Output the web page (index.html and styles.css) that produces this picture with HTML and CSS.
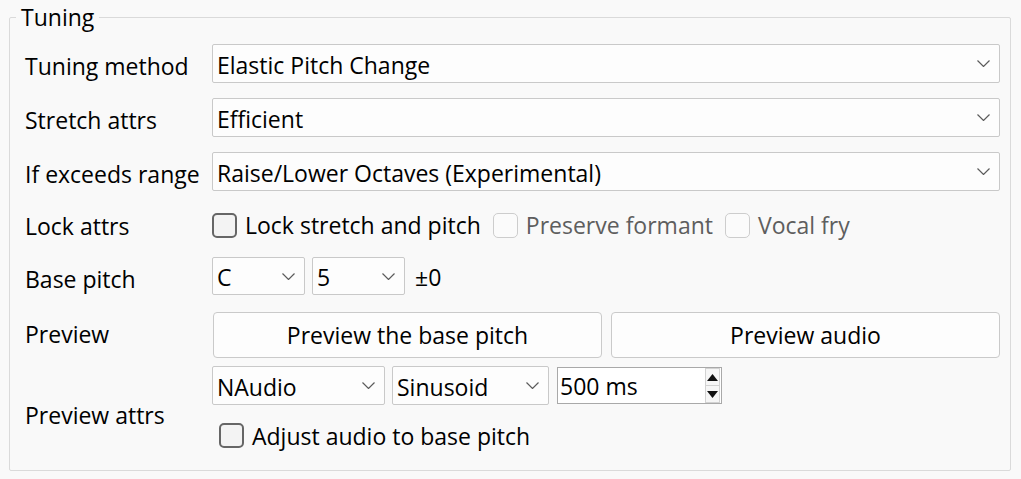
FILE: index.html
```html
<!DOCTYPE html>
<html>
<head>
<meta charset="utf-8">
<link rel="stylesheet" href="styles.css">
</head>
<body>
<fieldset class="group">
  <legend class="legend">Tuning</legend>

  <div class="row">
    <div class="label">Tuning method</div>
    <div class="combo wide"><span>Elastic Pitch Change</span><svg class="chev" width="13" height="7" viewBox="0 0 13 7"><polyline points="0.5,0.5 6.5,6.5 12.5,0.5"/></svg></div>
  </div>

  <div class="row gap15">
    <div class="label">Stretch attrs</div>
    <div class="combo wide"><span>Efficient</span><svg class="chev" width="13" height="7" viewBox="0 0 13 7"><polyline points="0.5,0.5 6.5,6.5 12.5,0.5"/></svg></div>
  </div>

  <div class="row gap15">
    <div class="label">If exceeds range</div>
    <div class="combo wide"><span>Raise/Lower Octaves (Experimental)</span><svg class="chev" width="13" height="7" viewBox="0 0 13 7"><polyline points="0.5,0.5 6.5,6.5 12.5,0.5"/></svg></div>
  </div>

  <div class="row gap15 checkrow">
    <div class="label mid">Lock attrs</div>
    <div class="checks">
      <label class="check"><span class="box"></span><span>Lock stretch and pitch</span></label>
      <label class="check disabled"><span class="box"></span><span>Preserve formant</span></label>
      <label class="check disabled"><span class="box"></span><span>Vocal fry</span></label>
    </div>
  </div>

  <div class="row gap13">
    <div class="label">Base pitch</div>
    <div class="inline">
      <div class="combo small"><span>C</span><svg class="chev" width="13" height="7" viewBox="0 0 13 7"><polyline points="0.5,0.5 6.5,6.5 12.5,0.5"/></svg></div>
      <div class="combo small"><span>5</span><svg class="chev" width="13" height="7" viewBox="0 0 13 7"><polyline points="0.5,0.5 6.5,6.5 12.5,0.5"/></svg></div>
      <span class="offset">±0</span>
    </div>
  </div>

  <div class="row gap17">
    <div class="label">Preview</div>
    <div class="buttons">
      <button class="btn">Preview the base pitch</button>
      <button class="btn">Preview audio</button>
    </div>
  </div>

  <div class="row gap8 attrs">
    <div class="label mid attrs-label">Preview attrs</div>
    <div class="stack">
      <div class="inline">
        <div class="combo backend"><span>NAudio</span><svg class="chev" width="13" height="7" viewBox="0 0 13 7"><polyline points="0.5,0.5 6.5,6.5 12.5,0.5"/></svg></div>
        <div class="combo wave"><span>Sinusoid</span><svg class="chev" width="13" height="7" viewBox="0 0 13 7"><polyline points="0.5,0.5 6.5,6.5 12.5,0.5"/></svg></div>
        <div class="numeric">
          <span class="num-text">500 ms</span>
          <div class="spin">
            <div class="spin-btn"><svg width="11" height="7" viewBox="0 0 11 7"><polygon points="5.5,0 11,7 0,7"/></svg></div>
            <div class="spin-btn"><svg width="11" height="7" viewBox="0 0 11 7"><polygon points="0,0 11,0 5.5,7"/></svg></div>
          </div>
        </div>
      </div>
      <label class="check adjust"><span class="box"></span><span>Adjust audio to base pitch</span></label>
    </div>
  </div>
</fieldset>
</body>
</html>
```

FILE: styles.css
```css
html, body {
  margin: 0;
  padding: 0;
  background: #f9f9f9;
}
body {
  font-family: "Open Sans", "Noto Sans", sans-serif;
  font-size: 23px;
  line-height: 30px;
  color: #000;
  height: 479px;
  overflow: hidden;
}
.group {
  margin: 2px 10px 0 9px;
  padding: 12px 10px 22px 15px;
  border: 1px solid #dadada;
  border-radius: 2px;
}
.legend {
  padding: 0 5px;
  margin-left: -9px;
  line-height: 30px;
}
.row {
  display: flex;
  align-items: flex-start;
}
.gap15 { margin-top: 15px; }
.gap13 { margin-top: 13px; }
.gap17 { margin-top: 17px; }
.gap8 { margin-top: 8px; }
.label {
  width: 187px;
  flex: none;
  padding-top: 7px;
  white-space: nowrap;
}
.label.mid {
  align-self: center;
  padding-top: 1px;
}
.label.attrs-label {
  padding-top: 15px;
}
.combo {
  box-sizing: border-box;
  height: 39px;
  display: flex;
  align-items: center;
  justify-content: space-between;
  padding: 0 9px 0 4px;
  background: #fdfdfd;
  border: 1px solid #c9c9c9;
  border-radius: 2px;
  white-space: nowrap;
}
.combo span { padding-top: 2px; }
.combo.wide { flex: 1; }
.combo.small { width: 93px; height: 38px; }
.combo.backend { width: 173px; }
.combo.wave { width: 157px; }
.chev {
  flex: none;
  fill: none;
  stroke: #5c5c5c;
  stroke-width: 1.2;
}
.checkrow { height: 38px; align-items: center; }
.checks {
  display: flex;
  align-items: center;
  gap: 12px;
}
.check {
  display: flex;
  align-items: center;
  gap: 8px;
  white-space: nowrap;
}
.box {
  box-sizing: border-box;
  width: 25px;
  height: 25px;
  border: 2px solid #666;
  border-radius: 5px;
  background: #f3f3f3;
  flex: none;
}
.check.disabled { color: #5e5e5e; }
.check.disabled .box {
  border: 1.5px solid #cdcdcd;
  background: #fbfbfb;
}
.inline {
  display: flex;
  align-items: center;
  gap: 7px;
}
.offset { margin-left: 3px; padding-top: 2px; }
.buttons {
  flex: 1;
  display: flex;
  gap: 9px;
  padding-left: 1px;
}
.btn {
  flex: 1;
  height: 46px;
  font: inherit;
  color: #000;
  background: #fdfdfd;
  border: 1px solid #cacaca;
  border-radius: 4px;
  padding: 0;
}
.stack {
  display: flex;
  flex-direction: column;
}
.numeric {
  box-sizing: border-box;
  width: 165px;
  height: 37px;
  margin-left: 1px;
  display: flex;
  align-items: center;
  justify-content: space-between;
  background: #fff;
  border: 1px solid #a9a9a9;
  padding: 0 0 0 2px;
}
.num-text { padding-top: 1px; }
.spin {
  align-self: stretch;
  width: 15px;
  margin-right: 1px;
  display: flex;
  flex-direction: column;
  border: 1px solid #d2d2d2;
  box-sizing: border-box;
}
.spin-btn {
  flex: 1;
  display: flex;
  align-items: center;
  justify-content: center;
  background: #f6f6f6;
}
.spin-btn + .spin-btn { border-top: 1px solid #d2d2d2; }
.spin-btn svg { fill: #111; }
.check.adjust {
  margin-top: 18px;
  margin-left: 7px;
  height: 25px;
}
```
